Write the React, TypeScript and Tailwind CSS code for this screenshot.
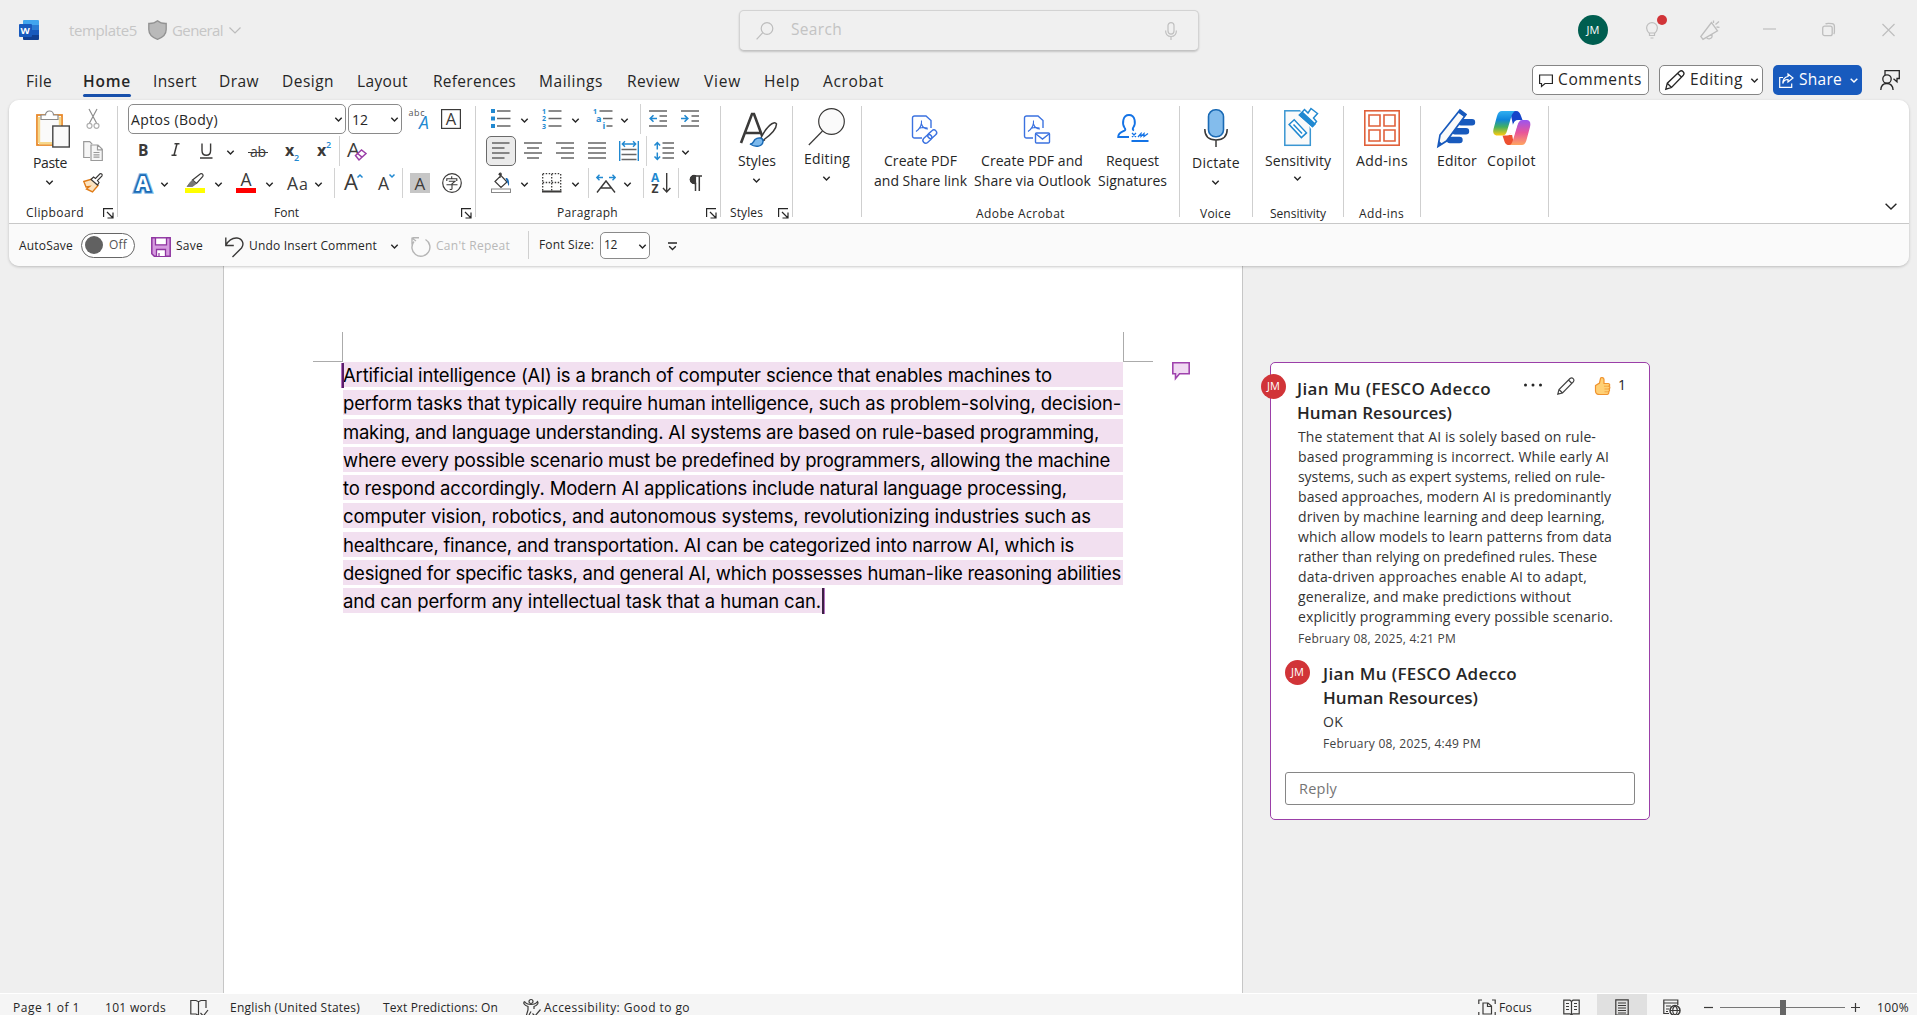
import React, { useLayoutEffect, useRef, useState } from "react";

type FitProps = { w: number; className?: string; children: string };

/** Single line of text whose letter spacing is adjusted to fill a given width. */
function Fit({ w, className = "", children }: FitProps) {
  const ref = useRef<HTMLSpanElement>(null);
  const [spacing, setSpacing] = useState(0);
  useLayoutEffect(() => {
    const el = ref.current;
    if (!el) return;
    el.style.letterSpacing = "0px";
    const natural = el.getBoundingClientRect().width;
    const next = (w - natural) / Math.max(1, children.length);
    el.style.letterSpacing = `${next}px`;
    setSpacing(next);
  }, [w, children, className]);
  return (
    <span className="flex shrink-0">
      <span ref={ref} className={`inline-block shrink-0 whitespace-nowrap ${className}`} style={{ letterSpacing: `${spacing}px` }}>
        {children}
      </span>
    </span>
  );
}

type IconProps = { w?: number; h?: number; className?: string; children: React.ReactNode };

function Icon({ w = 20, h = 20, className = "", children }: IconProps) {
  return (
    <svg width={w} height={h} viewBox={`0 0 ${w} ${h}`} fill="none" stroke="#3b3a39" strokeWidth="1.2" className={`block shrink-0 overflow-visible ${className}`}>
      {children}
    </svg>
  );
}

function Chev({ className = "" }: { className?: string }) {
  return (
    <Icon w={7} h={5} className={className}>
      <path d="M.3.8 3.500 4 6.700.8" stroke="#262626" strokeWidth="1.4" />
    </Icon>
  );
}

function Divider({ className = "" }: { className?: string }) {
  return <div className={`h-[30px] w-px shrink-0 bg-[#d2d2d2] ${className}`} />;
}

function Launcher({ className = "" }: { className?: string }) {
  return (
    <Icon w={11} h={11} className={className}>
      <path d="M.6 9V.6H10M4 4l5.5 5.5M10 4.5V10H4.5" stroke="#262626" />
    </Icon>
  );
}

function Group({ className, children }: { className: string; children: React.ReactNode }) {
  return (
    <section className={`relative flex h-[123px] shrink-0 flex-col after:absolute after:right-0 after:top-[6px] after:h-[111px] after:w-px after:bg-[#cfcfcf] ${className}`}>
      {children}
    </section>
  );
}

const row = "flex h-8 shrink-0 items-center";
const content = "flex h-[101px] shrink-0";
const footer = "flex h-[22px] shrink-0 items-center";
const label = "mt-[2px] text-[12px] text-[#262626]";
const lowLabel = "mt-[4px] text-[12px] text-[#262626]";
const big = "text-[14px] leading-[20px] text-[#262626]";

function G({ x, y, s, f = "#3b3a39", wt = 400, children, ...rest }: { x: number; y: number; s: number; f?: string; wt?: number; children: string } & React.SVGProps<SVGTextElement>) {
  return (
    <text x={x} y={y} fontSize={s} fill={f} stroke="none" fontWeight={wt} {...rest}>
      {children}
    </text>
  );
}

function TitleBar() {
  return (
    <header className="flex h-[60px] items-center">
      <Icon className="ml-[19px]">
        <g stroke="none">
          <path d="M5 0h14a1 1 0 0 1 1 1v4.5H4V1a1 1 0 0 1 1-1Z" fill="#41a5ee" />
          <path d="M4 5h16v5H4z" fill="#2b7cd3" />
          <path d="M4 10h16v5H4z" fill="#185abd" />
          <path d="M4 15h16v4a1 1 0 0 1-1 1H5a1 1 0 0 1-1-1Z" fill="#103f91" />
          <rect y="4" width="13" height="13" rx="1" fill="#185abd" />
          <G x={1.5} y={14.2} s={9.6} f="#fff" wt={700}>W</G>
        </g>
      </Icon>
      <Fit w={68} className="ml-[30px] text-[15px] text-[#c6c6c6]">template5</Fit>
      <Icon w={19} className="ml-[11px]">
        <path d="M9.5.8C7 3 4 3.6.8 3.5v6c0 5 3.5 8 8.7 9.8 5.2-1.8 8.7-4.8 8.7-9.8v-6C15 3.6 12 3 9.5.8Z" fill="#b9b9b9" stroke="#929292" strokeWidth="1.3" />
      </Icon>
      <Fit w={51} className="ml-[5px] text-[15px] text-[#c6c6c6]">General</Fit>
      <Icon w={12} h={7} className="ml-[6px]"><path d="m.5.5 5.500 5.500 5.500-5.500" stroke="#bcbcbc" /></Icon>
      <div className="ml-[498px] mt-[10px] flex h-[41px] w-[460px] items-center self-start rounded-[5px] border border-[#d3d3d3] border-b-[#c3c3c3] bg-[#f0f0f0] shadow-[0_1px_2px_rgba(0,0,0,0.18)]">
        <Icon w={18} h={18} className="ml-[16px]"><g stroke="#bdbdbd"><circle cx="11" cy="6.5" r="5.8" /><path d="M6.800 10.700.6 17.300" /></g></Icon>
        <Fit w={51} className="mb-[2px] ml-[17px] text-[15.5px] text-[#c3c3c3]">Search</Fit>
        <Icon w={12} h={18} className="ml-[323px]"><g stroke="#c0c0c0"><rect x="3" y=".6" width="6" height="11.5" rx="3" /><path d="M.6 8.500c0 4 2.400 6 5.400 6s5.400-2 5.400-6M6 14.500V18" /></g></Icon>
      </div>
      <div className="ml-[379px] flex size-[30px] items-center justify-center rounded-full bg-[#005e50] text-[11px] text-white">JM</div>
      <div className="relative ml-[38px]">
        <Icon w={12} h={17}><g stroke="#bebebe"><path d="M3.500 11.500C1.500 9.600.6 8 .6 6a5.400 5.400 0 0 1 10.800 0c0 2-.9 3.600-2.900 5.500v2h-5ZM3.500 11h5M4.500 16h3" /></g></Icon>
        <span className="absolute -top-[7px] left-[11px] size-[10px] rounded-full bg-[#d13438]" />
      </div>
      <Icon className="ml-[42px]"><g stroke="#bebebe" strokeWidth="1.3"><path d="M11.500 2.500.8 16.500 3 19.300l14.500-8.500ZM6.500 17.500c1 2 4.500 1.800 5.500-.5V14M13.500 3V.5M15.500 4.500l3.500-3M16.500 7l3 .3" /></g></Icon>
      <Icon w={13} h={2} className="mb-[2px] ml-[43px]"><path d="M0 1h13" stroke="#bebebe" /></Icon>
      <Icon w={13} h={14} className="ml-[46px]"><g stroke="#bebebe" strokeWidth="1.3"><rect x=".7" y="3.2" width="9.5" height="9.5" rx="2" /><path d="M3.500 1c.5-.4 5.500-.4 6.500-.3 1.600.2 2.400 1.200 2.400 2.500V9c0 .7-.2 1.500-.7 2" /></g></Icon>
      <Icon w={13} h={12} className="ml-[47px]"><path d="m.5 0 12 12m0-12-12 12" stroke="#bebebe" /></Icon>
    </header>
  );
}

function Tabs() {
  const t = "text-[15.5px] text-[#262626]";
  return (
    <nav className="flex h-10 items-center">
      <div className="flex h-10 items-center">
        <Fit w={26} className={`ml-[26px] mt-[3px] ${t}`}>File</Fit>
        <div className="relative ml-[31px] flex h-full items-center">
          <Fit w={48} className="mt-[3px] text-[15.5px] font-semibold text-[#262626]">Home</Fit>
          <span className="absolute bottom-[3px] left-0 h-[3px] w-[48px] rounded-full bg-[#1850ab]" />
        </div>
        <Fit w={44} className={`ml-[22px] mt-[3px] ${t}`}>Insert</Fit>
        <Fit w={40} className={`ml-[22px] mt-[3px] ${t}`}>Draw</Fit>
        <Fit w={52} className={`ml-[23px] mt-[3px] ${t}`}>Design</Fit>
        <Fit w={51} className={`ml-[23px] mt-[3px] ${t}`}>Layout</Fit>
        <Fit w={83} className={`ml-[25px] mt-[3px] ${t}`}>References</Fit>
        <Fit w={64} className={`ml-[23px] mt-[3px] ${t}`}>Mailings</Fit>
        <Fit w={53} className={`ml-[24px] mt-[3px] ${t}`}>Review</Fit>
        <Fit w={37} className={`ml-[24px] mt-[3px] ${t}`}>View</Fit>
        <Fit w={36} className={`ml-[23px] mt-[3px] ${t}`}>Help</Fit>
        <Fit w={61} className={`ml-[23px] mt-[3px] ${t}`}>Acrobat</Fit>
      </div>
      <div className="ml-auto flex items-center pr-[17px]">
        <button className="flex h-[30px] w-[117px] items-center rounded-[5px] border border-[#858585] bg-white">
          <Icon w={14} h={13} className="ml-[6px]"><path d="M.6 1h12.800v8.500H6L2.500 12.500v-3H.6Z" stroke="#262626" /></Icon>
          <Fit w={84} className={`ml-[5px] ${t}`}>Comments</Fit>
        </button>
        <button className="ml-[10px] flex h-[30px] w-[104px] items-center rounded-[5px] border border-[#858585] bg-white">
          <Icon w={20} h={20} className="ml-[5px]"><path d="M.8 19.200 2.300 13.200 14.500 1.600c2.600-2.200 5.800 1.200 3.800 3.600L6.500 17.500ZM12.800 3.500l3.800 3.800M2.300 13.200l4.200 4.300" stroke="#262626" strokeWidth="1.3" /></Icon>
          <Fit w={53} className={`ml-[5px] ${t}`}>Editing</Fit>
          <Chev className="ml-[8px]" />
        </button>
        <button className="ml-[10px] flex h-[30px] w-[89px] items-center rounded-[5px] bg-[#185abd]">
          <Icon w={15} h={15} className="ml-[6px]"><path d="M4 4.500H.7v9.800h12V10.500M9 1l5 4-5 4V6.500C6 6.400 4.500 8 3.800 10.500 3.900 6.800 6 4 9 3.500Z" stroke="#fff" /></Icon>
          <Fit w={43} className="ml-[5px] text-[15.5px] text-white">Share</Fit>
          <Icon w={8} h={5} className="ml-[8px]"><path d="M.7.8 4 4 7.300.8" stroke="#fff" strokeWidth="1.5" /></Icon>
        </button>
        <Icon w={20} h={20} className="ml-[18px]"><path d="M5 5V.7h14.300v7.800H17v3.300l-3.500-3M.8 20c.2-4 2.500-6.500 6-6.500s6 2.500 6.300 6.500" stroke="#262626" strokeWidth="1.3" /><circle cx="7" cy="9" r="4.2" stroke="#262626" strokeWidth="1.3" /></Icon>
      </div>
    </nav>
  );
}

function Clipboard() {
  return (
    <Group className="w-[109px]">
      <div className={content}>
        <div className="flex w-[74px] flex-col pt-[10px]">
          <Icon w={34} h={38} className="ml-[27px]">
            <rect x="1" y="5" width="25" height="30" fill="#fafafa" stroke="#e8892b" strokeWidth="1.8" />
            <path d="M3 33.200h13M3 7v26M24 7v8" stroke="#f6d78b" strokeWidth="2.4" />
            <path d="M5 9.500V5h4.500a4 4 0 0 1 8 0H22v4.500Z" fill="#fff" stroke="#8a8a8a" />
            <rect x="16.8" y="16" width="16.5" height="21" fill="#fafafa" stroke="#444" strokeWidth="1.4" />
          </Icon>
          <Fit w={34} className={`${big} ml-[24px] mt-[5px]`}>Paste</Fit>
          <Chev className="ml-[37px] mt-[7px]" />
        </div>
        <div className="flex flex-col gap-3 pt-[9px]">
          <Icon><path d="M6 0l7.500 14M14 0 6.500 14" stroke="#8e8e8e" /><circle cx="6.5" cy="16.8" r="2.5" stroke="#b0b0b0" /><circle cx="13.5" cy="16.8" r="2.5" stroke="#b0b0b0" /></Icon>
          <Icon><path d="M7 16.500H.7V.7h6l2.500 2.500" stroke="#9a9a9a" fill="#f6f6f6" /><path d="M8 4h7l4.300 4.300v11.200H8ZM14.500 4v4.800h4.800M10.500 11.500h6M10.500 13.800h6M10.500 16.200h6" stroke="#9a9a9a" fill="#f6f6f6" /></Icon>
          <Icon><path d="M.8 8.500 9 6l6 6.500-5.500 6.500L3.500 16l3-2.500-3.500.5Z" fill="#fbe3c0" stroke="#e07b16" strokeWidth="1.4" /><path d="M8 6.500 10.500 4l2 1.500L17 .8c1.500-.5 2.700.8 2 2L14.500 7.500 16 9.500l-1.500 2.500Z" fill="#fff" stroke="#3b3a39" /></Icon>
        </div>
      </div>
      <div className={footer}>
        <Fit w={58} className={`${label} ml-[17px]`}>Clipboard</Fit>
        <Launcher className="ml-[19px] mt-[2px]" />
      </div>
    </Group>
  );
}

function FontGroup() {
  return (
    <Group className="w-[358px] pt-[3px]">
      <div className={`${row} pl-[10px]`}>
        <div className="flex h-[30px] w-[218px] items-center rounded-[5px] border border-[#8a8a8a]">
          <Fit w={87} className="ml-[2px] text-[14px] text-[#262626]">Aptos (Body)</Fit>
          <Chev className="ml-auto mr-[3px]" />
        </div>
        <div className="ml-[2px] flex h-[30px] w-[54px] items-center rounded-[5px] border border-[#8a8a8a]">
          <Fit w={16} className="ml-[3px] text-[14px] text-[#262626]">12</Fit>
          <Chev className="ml-auto mr-[3px]" />
        </div>
        <Icon className="ml-[7px]"><G x={-0.5} y={7} s={9} f="#555" textLength={16}>abc</G><G x={10} y={20} s={17.5} f="#2189d1" fontStyle="italic">A</G></Icon>
        <Icon className="ml-[12px]"><rect x=".6" y=".6" width="18.8" height="18.8" /><G x={4.8} y={16} s={16.5}>A</G></Icon>
      </div>
      <div className={`${row} pl-[20px]`}>
        <Icon w={11}><G x={0} y={14.5} s={15.5} wt={700}>B</G></Icon>
        <Icon w={10} className="ml-[22px]"><path d="M3.500 2.700H8.500M.5 14.300H5.500M6 2.700 3 14.300" strokeWidth="1.5" /></Icon>
        <Icon w={13} className="ml-[19px]"><path d="M2 2.500v7c0 3 1.800 4.800 4.300 4.800s4.300-1.800 4.300-4.800v-7M0 17h12.500" strokeWidth="1.4" /></Icon>
        <Chev className="ml-[14px] mt-[2px]" />
        <Icon className="ml-[14px]"><G x={2} y={16} s={14} textLength={16}>ab</G><path d="M0 11.500h20" /></Icon>
        <Icon w={15} className="ml-[17px]"><G x={0} y={14.5} s={16} wt={700}>x</G><G x={9} y={20} s={9} f="#2189d1" wt={600}>2</G></Icon>
        <Icon w={15} className="ml-[17px]"><G x={0} y={14.5} s={16} wt={700}>x</G><G x={9} y={6.5} s={9} f="#2189d1" wt={600}>2</G></Icon>
        <Divider className="ml-[7px]" />
        <Icon className="ml-[7px]"><G x={0} y={16} s={20.5}>A</G><path d="M8.500 14.500 14.500 9l4.500 3.500-7 6.500ZM10.500 12.500l4.500 3.700" fill="#fff" stroke="#9b3fa8" strokeWidth="1.5" /></Icon>
      </div>
      <div className={`${row} pl-[15px]`}>
        <Icon><G x={2.8} y={17.5} s={20.5} f="#fff" wt={700} style={{ stroke: "#84bdea", strokeWidth: 5.5 }}>A</G><G x={2.8} y={17.5} s={20.5} f="#fff" wt={700} style={{ stroke: "#1a6ab5", strokeWidth: 3.4 }}>A</G><G x={2.8} y={17.5} s={20.5} f="#fff" wt={700}>A</G></Icon>
        <Chev className="ml-[8px] mt-[2px]" />
        <Icon className="ml-[17px]"><path d="M0 17.500h20" stroke="#ff0" strokeWidth="5" /><path d="m7.500 7 8-6.300c1.500-.7 3.300 1.100 2.300 2.700L11.500 10.500Z" /><path d="M7.500 7 5 9.500 2 13.500h5.500l4-3Z" fill="#777" stroke="#555" strokeWidth=".6" /></Icon>
        <Chev className="ml-[10px] mt-[2px]" />
        <Icon className="ml-[14px]"><G x={4.5} y={13} s={17.5}>A</G><path d="M0 17.500h20" stroke="#f00" strokeWidth="5" /></Icon>
        <Chev className="ml-[10px] mt-[2px]" />
        <Icon className="ml-[14px]"><G x={0} y={17} s={17.5}>A</G><G x={12} y={17} s={16}>a</G></Icon>
        <Chev className="ml-[8px] mt-[2px]" />
        <Divider className="ml-[12px]" />
        <Icon className="ml-[9px]"><G x={0} y={17} s={22}>A</G><path d="m13.500 4.500 2.500-2.500 2.500 2.500" stroke="#2189d1" strokeWidth="1.5" /></Icon>
        <Icon className="ml-[14px]"><G x={0} y={17} s={17.5}>A</G><path d="m11.500 1.500 2.500 2.500 2.500-2.500" stroke="#2189d1" strokeWidth="1.5" /></Icon>
        <Divider className="ml-[4px]" />
        <Icon className="ml-[7px]"><rect width="20" height="20" fill="#c6c6c6" stroke="none" /><G x={4.5} y={16.5} s={17}>A</G></Icon>
        <Icon className="ml-[12px]"><circle cx="10" cy="10" r="9.3" /><path d="M9.700 3.300v2M4.800 8V5.800h10V8M6.800 8.300H13L10 10.800v5c0 .8-1 .8-2.300.6M4.500 11.800h11" strokeWidth="1.1" /></Icon>
      </div>
      <div className={`mt-[2px] ${footer}`}>
        <Fit w={25} className={`${label} ml-[156px]`}>Font</Fit>
        <Launcher className="ml-[162px] mt-[2px]" />
      </div>
    </Group>
  );
}

const g = "#666";
const b = "#2189d1";

function ParagraphGroup() {
  return (
    <Group className="w-[245px] pt-[3px]">
      <div className={`${row} pl-[15px]`}>
        <Icon><path d="M6 2h13.500M6 9.500h13.500M6 17h13.500" stroke={g} strokeWidth="1.4" /><path d="M0 0h4v4H0zM0 7.500h4v4H0zM0 15h4v4H0z" fill={b} stroke="none" /></Icon>
        <Chev className="ml-[10px] mt-[2px]" />
        <Icon className="ml-[14px]"><path d="M6.500 2H19.500M6.500 9.500H19.500M6.500 17H19.500" stroke={g} strokeWidth="1.4" /><G x={0} y={4.5} s={7} f={b} wt={700}>1</G><G x={0} y={12} s={7} f={b} wt={700}>2</G><G x={0} y={19.5} s={7} f={b} wt={700}>3</G></Icon>
        <Chev className="ml-[10px] mt-[2px]" />
        <Icon className="ml-[14px]"><path d="M6.500 2H19.500M10 9.500H19.500M13.500 17H19.500" stroke={g} strokeWidth="1.4" /><G x={0} y={4.5} s={7} f={b} wt={700}>1</G><G x={3} y={12.5} s={9} f={b} wt={700}>a</G><G x={9.5} y={20} s={9} f={b} wt={700}>i</G></Icon>
        <Chev className="ml-[8px] mt-[2px]" />
        <Divider className="ml-[12px]" />
        <Icon className="ml-[8px]"><path d="M0 2h18M10.500 7H18M10.500 12H18M0 17h18" stroke={g} strokeWidth="1.4" /><path d="M8 9.500H1.500M4.500 6.300 1.200 9.500l3.300 3.200" stroke={b} strokeWidth="1.6" /></Icon>
        <Icon className="ml-[12px]"><path d="M0 2h18M10.500 7H18M10.500 12H18M0 17h18" stroke={g} strokeWidth="1.4" /><path d="M0 9.500h6.500M3.500 6.300l3.300 3.200-3.300 3.200" stroke={b} strokeWidth="1.6" /></Icon>
      </div>
      <div className={`${row} pl-[10px]`}>
        <div className="flex size-[30px] items-center justify-center rounded-[5px] border border-[#6a6a6a] bg-[#ebebeb]">
          <Icon w={18}><path d="M0 2h17.500M0 7h12.500M0 12h17.500M0 17h12.500" stroke={g} strokeWidth="1.4" /></Icon>
        </div>
        <Icon w={18} className="ml-[8px]"><path d="M0 2h18M3 7h12M0 12h18M3 17h12" stroke={g} strokeWidth="1.4" /></Icon>
        <Icon w={18} className="ml-[14px]"><path d="M0 2h18M5 7h13M0 12h18M5 17h13" stroke={g} strokeWidth="1.4" /></Icon>
        <Icon w={18} className="ml-[14px]"><path d="M0 2h18M0 7h18M0 12h18M0 17h18" stroke={g} strokeWidth="1.4" /></Icon>
        <Icon className="ml-[13px]"><path d="M2.500 8.500h15M2.500 13.500h15M2.500 18.500h15" stroke={g} strokeWidth="1.4" /><path d="M.7 0v20M19.300 0v20M3.500 3h13M6 .3 3.300 3 6 5.700M14 .3 16.700 3 14 5.700" stroke={b} strokeWidth="1.4" /></Icon>
        <Divider className="ml-[7px]" />
        <Icon className="ml-[7px]"><path d="M8.500 2h11.500M8.500 7h11.500M8.500 12h11.500M8.500 17h11.500" stroke={g} strokeWidth="1.4" /><path d="M3.300 1.500v7M3.300 11.500v7M.5 4.500 3.300 1.500l2.800 3M.5 15.500l2.800 3 2.800-3" stroke={b} strokeWidth="1.5" /></Icon>
        <Chev className="ml-[8px] mt-[2px]" />
      </div>
      <div className={`${row} pl-[15px]`}>
        <Icon><path d="M9 1v4M4 8.500 10 2.500l6 6.500-6 5.500ZM10 2.500C11-.5 8-.5 8 2" /><path d="M14.500 5c2.500-.5 4 2 3.500 8-1.500-1-1-3.500-2-4Z" fill="#1a6ab5" stroke="none" /><rect x=".5" y="16" width="19" height="3.5" fill="#fff" stroke="#888" strokeWidth="1" /></Icon>
        <Chev className="ml-[10px] mt-[2px]" />
        <Icon className="ml-[14px]"><path d="M.7.700h18M.7 9.500h18M.7 1v17M9.700 1v17M18.700 1v17" strokeDasharray="1.5 1.5" strokeWidth="1.3" /><path d="M0 18.500h19.500" strokeWidth="2" /></Icon>
        <Chev className="ml-[10px] mt-[2px]" />
        <Divider className="ml-[9px]" />
        <Icon className="ml-[7px]"><path d="M1 19.500 10 8l9 11.500M4.500 15h11" strokeWidth="1.4" /><path d="M7 4.500H1M3.500 1.800.8 4.500 3.500 7.200M13 4.500h6M16.500 1.800 19.200 4.500 16.500 7.200" stroke={b} strokeWidth="1.4" /></Icon>
        <Chev className="ml-[8px] mt-[2px]" />
        <Divider className="ml-[12px]" />
        <Icon className="ml-[7px]"><G x={0} y={8.5} s={12} f={b} wt={700}>A</G><G x={0.5} y={19.8} s={12} wt={700}>Z</G><path d="M15.700 0v19M12 15l3.700 4 3.700-4" strokeWidth="1.4" /></Icon>
        <Divider className="ml-[7px]" />
        <Icon w={14} className="ml-[10px]"><path d="M5.500 2.500a4 4 0 0 0 0 8h1V18M10.300 18V3M5 2.900h8" strokeWidth="1.5" /><path d="M6.500 2.500v8H5.300a4 4 0 0 1 0-8Z" fill="#3b3a39" /></Icon>
      </div>
      <div className={`mt-[2px] ${footer}`}>
        <Fit w={61} className={`${label} ml-[81px]`}>Paragraph</Fit>
        <Launcher className="ml-[88px] mt-[2px]" />
      </div>
    </Group>
  );
}

function Ribbon() {
  return (
    <div className="flex h-[124px] border-b border-[#c8c8c8] bg-white">
      <Clipboard />
      <FontGroup />
      <ParagraphGroup />
      <Group className="w-[72px]">
        <div className={`${content} flex-col pt-[12px]`}>
          <Icon w={37} h={36} className="ml-[19px]">
            <path d="M1 31 12 2h2l10 27M5 21h15" strokeWidth="2.6" />
            <path d="M21 26C26 15 34 8 36.500 12c0 5-6 11-13 16" fill="#fff" strokeWidth="1.5" />
            <path d="M10 32c3 .5 3-2 5-4.500 3-2.500 8.500-2 8 2-.5 5-7 6.500-13 2.500Z" fill="#7cb9ec" stroke="#1a6ab5" strokeWidth="1.5" />
          </Icon>
          <Fit w={38} className={`${big} ml-[17px] mt-[3px]`}>Styles</Fit>
          <Chev className="ml-[32px] mt-[7px]" />
        </div>
        <div className={footer}>
          <Fit w={33} className={`${label} ml-[9px]`}>Styles</Fit>
          <Launcher className="ml-[15px] mt-[2px]" />
        </div>
      </Group>
      <Group className="w-[69px]">
        <div className={`${content} flex-col pt-[8px]`}>
          <Icon w={38} h={38} className="ml-[15px]"><circle cx="23.5" cy="13.5" r="12.8" fill="#fafafa" /><path d="M14.500 23 .8 37" /></Icon>
          <Fit w={46} className={`${big} ml-[11px] mt-[3px]`}>Editing</Fit>
          <Chev className="ml-[30px] mt-[7px]" />
        </div>
      </Group>
      <Group className="w-[318px]">
        <div className={`${content} pt-[14px]`}>
          <div className="ml-[12px] flex w-[93px] flex-col">
            <Icon w={26} h={29} className="ml-[38px] mt-[1px]">
              <g stroke="#3b72e0" strokeWidth="1.4"><path d="M10 23H2.500a2 2 0 0 1-2-2V3a2 2 0 0 1 2-2H14l5 4.500V13" /><path d="M4 16.500c3.500-2.500 6-7 5.500-11M9.500 9c1 3 3.500 5 6.500 5M6.500 13.500c3-1 6-1.500 9-.5" strokeWidth="1.1" /><rect x="15" y="16.5" width="10" height="5.6" rx="2.8" transform="rotate(-42 20 19)" /><rect x="10.5" y="21" width="10" height="5.6" rx="2.8" transform="rotate(-42 15.5 24)" /></g>
            </Icon>
            <Fit w={73} className={`${big} ml-[10px] mt-[7px]`}>Create PDF</Fit>
            <Fit w={93} className={big}>and Share link</Fit>
          </div>
          <div className="ml-[7px] flex w-[117px] flex-col">
            <Icon w={26} h={29} className="ml-[50px] mt-[1px]">
              <g stroke="#3b72e0" strokeWidth="1.4"><path d="M9 23H2.500a2 2 0 0 1-2-2V3a2 2 0 0 1 2-2H14l5 4.500V13" /><path d="M4 16.500c3.500-2.500 6-7 5.500-11M9.500 9c1 3 3.500 5 6.500 5M6.500 13.500c3-1 6-1.500 9-.5" strokeWidth="1.1" /><rect x="11.5" y="18" width="14" height="10" rx="1" /><path d="m12 19 6.500 5 6.500-5" /></g>
            </Icon>
            <Fit w={102} className={`${big} ml-[7px] mt-[7px]`}>Create PDF and</Fit>
            <Fit w={117} className={big}>Share via Outlook</Fit>
          </div>
          <div className="ml-[7px] flex w-[69px] flex-col">
            <Icon w={32} h={29} className="ml-[19px]">
              <g stroke="#1473e6" strokeWidth="1.9"><path d="M12 23H1.200c0-4.500 4-5 6.500-6.500 1-.8.5-2-.3-3C5 10 5.500 1 12 1s7 9 4.300 12.500c-.8 1.500-.8 2.300.7 3" /><path d="M14.500 27h17" /><path d="m15 19 4 4m0-4-4 4M21 23l3-3.500v3l3-3v3l4-3" strokeWidth="1.3" /></g>
            </Icon>
            <Fit w={53} className={`${big} ml-[8px] mt-[8px]`}>Request</Fit>
            <Fit w={69} className={big}>Signatures</Fit>
          </div>
        </div>
        <div className={footer}><Fit w={89} className={`${lowLabel} ml-[114px]`}>Adobe Acrobat</Fit></div>
      </Group>
      <Group className="w-[73px]">
        <div className={`${content} flex-col pt-[9px]`}>
          <Icon w={24} h={38} className="ml-[24px]"><rect x="4.5" y=".8" width="15" height="27" rx="7" fill="#83bcec" stroke="#1a6ab5" strokeWidth="1.6" /><path d="M.8 20c0 7.500 4.200 11 11.200 11s11.200-3.500 11.200-11M12 31v7" strokeWidth="1.5" /></Icon>
          <Fit w={48} className={`${big} ml-[12px] mt-[6px]`}>Dictate</Fit>
          <Chev className="ml-[32px] mt-[7px]" />
        </div>
        <div className={footer}><Fit w={31} className={`${lowLabel} ml-[20px]`}>Voice</Fit></div>
      </Group>
      <Group className="w-[91px]">
        <div className={`${content} flex-col pt-[8px]`}>
          <Icon w={34} h={38} className="ml-[31px]">
            <rect x=".8" y="2.8" width="25.5" height="34.5" fill="#fafafa" stroke="#3a96d2" strokeWidth="1.5" />
            <path d="M15 0h19v21H27Z" fill="#fff" stroke="none" />
            <g stroke="#2189d1" strokeWidth="1.5"><rect x="4.8" y="17.2" width="18" height="7" transform="rotate(47 13.8 20.7)" fill="#fff" /><path d="m9.500 16.500 8.500 9" /><path d="m15.500 7 5-5.500L24 5l3-4.500 6.500 5-4 4.500 3 3.500-4 5Z" fill="#fff" /><path d="m15.500 7 3-2.500L31 16l-2.500 2.500Z" fill="#2189d1" /></g>
          </Icon>
          <Fit w={66} className={`${big} ml-[12px] mt-[5px]`}>Sensitivity</Fit>
          <Chev className="ml-[41px] mt-[5px]" />
        </div>
        <div className={footer}><Fit w={56} className={`${lowLabel} ml-[17px]`}>Sensitivity</Fit></div>
      </Group>
      <Group className="w-[77px]">
        <div className={`${content} flex-col pt-[10px]`}>
          <Icon w={36} h={36} className="ml-[20px]"><g stroke="#e0603a" strokeWidth="1.6"><rect x=".8" y=".8" width="34.4" height="34.4" /><path d="M5 5h11v11H5zM20 5h11v11H20zM5 20h11v11H5zM20 20h11v11H20z" /></g></Icon>
          <Fit w={52} className={`${big} ml-[12px] mt-[5px]`}>Add-ins</Fit>
        </div>
        <div className={footer}><Fit w={45} className={`${lowLabel} ml-[15px]`}>Add-ins</Fit></div>
      </Group>
      <Group className="w-[128px]">
        <div className={`${content} pt-[9px]`}>
          <div className="ml-[16px] flex w-[41px] flex-col">
            <Icon w={39} h={38}>
              <g stroke="#185abd" strokeWidth="6.4" strokeLinecap="round"><path d="M24 13.300h11M18 22.300h11M13 31h9.500" /></g>
              <path d="M3 26 23 1l6 4.500L9.500 32 1 37.500Z" fill="#fafafa" stroke="#185abd" strokeWidth="1.7" />
              <path d="m21 3.500 2-2.500 6 4.500-2 2.500ZM2 32l3.500 3L.8 37.800Z" fill="#185abd" stroke="none" />
            </Icon>
            <Fit w={40} className={`${big} mt-[4px]`}>Editor</Fit>
          </div>
          <div className="ml-[9px] flex w-[50px] flex-col">
            <Icon w={38} h={34} className="ml-[6px] mt-[2px]">
              <defs>
                <linearGradient id="cpl" x1="0" y1="0" x2="0" y2="1"><stop offset="0" stopColor="#31b0f0" /><stop offset=".35" stopColor="#0f86dc" /><stop offset=".65" stopColor="#44b060" /><stop offset="1" stopColor="#ffcb0c" /></linearGradient>
                <linearGradient id="cpr" x1="0" y1="0" x2="0" y2="1"><stop offset="0" stopColor="#9a55f0" /><stop offset=".5" stopColor="#e8559a" /><stop offset="1" stopColor="#ffa560" /></linearGradient>
              </defs>
              <g stroke="none">
                <path d="M17 0h6c3 0 4 2 5 5l1.500 4H25c-3 0-4 2-5 5Z" fill="#1544c9" />
                <path d="M21 34h-5c-3 0-4-1.500-5-5l-1.500-4.500H14c2.500 0 3.500-1 4.500-4Z" fill="#ed5030" />
                <path d="M9 0h14c-2 0-3.500 2-4.500 5L14 20c-1 3-2 4.500-5 4.500H4.500C1 24.500-.5 22 .5 18L4 5C5 1.500 6.500 0 9 0Z" fill="url(#cpl)" />
                <path d="M29 34H16c2 0 3-2 4-5l4.500-15c1-3 2-5 5-5h4C37 9 38 12 37 16l-3.500 13c-1 3.500-2.500 5-4.500 5Z" fill="url(#cpr)" />
                <path d="M22.500 10h4c-1.500 1-2 2.500-2.500 4l-3 10h-5c1.500-1 2-3 2.500-4.500l2-6.500c.5-1.500 1-2.500 2-3Z" fill="#fff" />
              </g>
            </Icon>
            <Fit w={49} className={`${big} mt-[6px]`}>Copilot</Fit>
          </div>
        </div>
      </Group>
      <div className="flex flex-1 items-end justify-end pb-[13px] pr-[12px]">
        <Icon w={12} h={7}><path d="m.6.700 5.400 5.300 5.400-5.300" stroke="#262626" strokeWidth="1.4" /></Icon>
      </div>
    </div>
  );
}

function QuickAccess() {
  const q = "text-[12px] text-[#262626]";
  return (
    <div className="flex h-[42px] items-center bg-[#fafafa]">
      <Fit w={54} className={`${q} ml-[10px] mt-px`}>AutoSave</Fit>
      <div className="ml-[8px] flex h-[25px] w-[54px] items-center rounded-full border border-[#666] bg-white">
        <span className="ml-[3px] size-[18px] rounded-full bg-[#616161]" />
        <Fit w={18} className="ml-[6px] text-[12px] text-[#555]">Off</Fit>
      </div>
      <Icon className="ml-[16px] mt-[4px]"><path d="M.8.8h18.400v18.400H3.300L.8 16.700Z" fill="#d59adf" stroke="#8e35a0" strokeWidth="1.5" /><path d="M4.500.8h11v7h-11zM5.500 19v-6.500h9V19" fill="#fff" stroke="#8e35a0" strokeWidth="1.3" /><path d="M8 19v-3" stroke="#8e35a0" /></Icon>
      <Fit w={27} className={`${q} ml-[5px] mt-px`}>Save</Fit>
      <Icon className="ml-[22px] mt-[3px]"><path d="M.8.500v8h8M.8 8.300C4 2.500 8 .7 12 1c5.500.5 7.500 6 4.500 10L7.500 20" strokeWidth="1.4" /></Icon>
      <Fit w={128} className={`${q} ml-[4px] mt-px`}>Undo Insert Comment</Fit>
      <Chev className="ml-[14px] mt-[2px]" />
      <Icon className="ml-[13px] mt-[3px]"><path d="M1 .5v7M8 .8H1.500M1.500 1.500 5 4M14.500 2.500A9 9 0 1 1 3 4.500" stroke="#b5b5b5" strokeWidth="1.4" /></Icon>
      <Fit w={74} className="ml-[5px] mt-px text-[12px] text-[#b8b8b8]">Can't Repeat</Fit>
      <div className="ml-[18px] h-[28px] w-px bg-[#d0d0d0]" />
      <Fit w={55} className={`${q} ml-[10px]`}>Font Size:</Fit>
      <div className="ml-[6px] flex h-[27px] w-[50px] items-center rounded-[5px] border border-[#8a8a8a] bg-white">
        <Fit w={13} className="ml-[3px] text-[12px] text-[#262626]">12</Fit>
        <Chev className="ml-auto mr-[3px] mt-[2px]" />
      </div>
      <Icon w={9} h={9} className="ml-[18px] mt-[2px]"><path d="M0 1h9M1.200 4.200 4.500 7.500l3.300-3.300" stroke="#262626" strokeWidth="1.3" /></Icon>
    </div>
  );
}

const lines: { text: string; w: number; cls: string }[] = [
  { text: "Artificial intelligence (AI) is a branch of computer science that enables machines to", w: 709, cls: "mb-[3px]" },
  { text: "perform tasks that typically require human intelligence, such as problem-solving, decision-", w: 778, cls: "mb-[4px]" },
  { text: "making, and language understanding. AI systems are based on rule-based programming,", w: 756, cls: "mb-[3px]" },
  { text: "where every possible scenario must be predefined by programmers, allowing the machine", w: 767, cls: "mb-[3px]" },
  { text: "to respond accordingly. Modern AI applications include natural language processing,", w: 724, cls: "mb-[3px]" },
  { text: "computer vision, robotics, and autonomous systems, revolutionizing industries such as", w: 748, cls: "mb-[4px]" },
  { text: "healthcare, finance, and transportation. AI can be categorized into narrow AI, which is", w: 731, cls: "mb-[3px]" },
  { text: "designed for specific tasks, and general AI, which possesses human-like reasoning abilities", w: 778, cls: "mb-[3px]" },
  { text: "and can perform any intellectual task that a human can.", w: 478, cls: "w-[480px]" },
];

function Page() {
  return (
    <main className="ml-[223px] w-[1020px] shrink-0 border-x border-[#c6c6c6] bg-white pt-[66px]">
      <div className="ml-[89px] flex h-[30px] w-[840px] justify-between">
        <div className="w-[30px] border-b border-r border-[#ababab]" />
        <div className="w-[30px] border-b border-l border-[#ababab]" />
      </div>
      <div className="flex pl-[119px]">
        <div className="relative flex w-[780px] flex-col">
          {lines.map((l) => (
            <div key={l.text} className={`flex h-[25px] items-center bg-[#f2e0f0] ${l.cls}`}>
              <Fit w={l.w} className="mt-px font-[Inter] text-[18.5px] leading-[25px] text-black">{l.text}</Fit>
            </div>
          ))}
          <span className="absolute -left-[2px] top-[1px] h-[25px] w-[3px] border-l border-[#b06fbd] bg-[#5c1f6c]" />
          <span className="absolute left-[479px] top-[226px] h-[26px] w-[3px] border-r border-[#b06fbd] bg-[#3c2044]" />
        </div>
        <Icon w={18} h={18} className="ml-[49px]"><path d="M.8.8h16.400v11H7.500L3.500 16.500V11.800H.8Z" fill="#f0d9f2" stroke="#9f43ad" strokeWidth="1.6" /></Icon>
      </div>
    </main>
  );
}

const commentLines: [string, number][] = [
  ["The statement that AI is solely based on rule-", 298],
  ["based programming is incorrect. While early AI", 311],
  ["systems, such as expert systems, relied on rule-", 307],
  ["based approaches, modern AI is predominantly", 313],
  ["driven by machine learning and deep learning,", 307],
  ["which allow models to learn patterns from data", 314],
  ["rather than relying on predefined rules. These", 299],
  ["data-driven approaches enable AI to adapt,", 289],
  ["generalize, and make predictions without", 273],
  ["explicitly programming every possible scenario.", 315],
];

function Avatar({ className }: { className: string }) {
  return <div className={`flex size-[25px] shrink-0 items-center justify-center rounded-full bg-[#d13438] text-[11px] text-white ${className}`}>JM</div>;
}

function CommentCard() {
  const name = "text-[17px] font-semibold leading-6 text-[#262626]";
  return (
    <aside className="ml-[27px] mt-[96px] flex h-[458px] w-[380px] flex-col rounded-[5px] border border-[#9b3fa8] bg-white">
      <div className="flex items-start">
        <Avatar className="-ml-[10px] mt-[11px]" />
        <div className="ml-[11px] mt-[14px] flex w-[194px] flex-col">
          <Fit w={194} className={name}>Jian Mu (FESCO Adecco</Fit>
          <Fit w={155} className={name}>Human Resources)</Fit>
        </div>
        <Icon w={18} h={4} className="ml-[33px] mt-[20px]"><g fill="#262626" stroke="none"><circle cx="1.5" cy="2" r="1.5" /><circle cx="9" cy="2" r="1.5" /><circle cx="16.5" cy="2" r="1.5" /></g></Icon>
        <Icon w={18} h={18} className="ml-[15px] mt-[14px]"><path d="M.8 17.200 2 12.500 13 1.500c2.300-1.800 5 .9 3.500 3.200L5.500 16ZM11.500 3l3.500 3.500M2 12.500l3.500 3.500" stroke="#424242" /></Icon>
        <Icon w={15} h={18} className="ml-[20px] mt-[14px]"><path d="M.5 8.500 4.500 6 5.500 1.500C5.800 0 9 .2 9 2.500v4h4.300c1.700 0 1.700 2 .8 2.600 1 .5 1 2.200 0 2.800.7.7.5 2.300-.4 2.700.4 1.400-.2 2.900-1.700 2.900H5C2 17.500.5 16.500.5 14Z" fill="#ffd075" stroke="#f0932e" /><path d="M9 9.200h5M9.500 12h4.500M9.500 14.800h4" stroke="#f0a040" strokeWidth=".9" /></Icon>
        <span className="ml-[8px] mt-[12px] text-[14px] leading-[20px] text-[#262626]">1</span>
      </div>
      <div className="ml-[27px] mt-[2px] flex flex-col">
        {commentLines.map(([text, w]) => (
          <Fit key={text} w={w} className="text-[14px] leading-5 text-[#333]">{text}</Fit>
        ))}
        <Fit w={158} className="mt-[2px] text-[12px] leading-5 text-[#424242]">February 08, 2025, 4:21 PM</Fit>
      </div>
      <div className="mt-[11px] flex">
        <Avatar className="ml-[14px]" />
        <div className="ml-[13px] mt-[2px] flex flex-col">
          <Fit w={194} className={name}>Jian Mu (FESCO Adecco</Fit>
          <Fit w={155} className={name}>Human Resources)</Fit>
          <Fit w={20} className="mt-[2px] text-[14px] leading-5 text-[#333]">OK</Fit>
          <Fit w={158} className="mt-[2px] text-[12px] leading-5 text-[#424242]">February 08, 2025, 4:49 PM</Fit>
        </div>
      </div>
      <div className="ml-[14px] mt-[18px] flex h-[33px] w-[350px] items-center rounded-[3px] border border-[#868686] bg-white">
        <Fit w={38} className="ml-[13px] text-[14.5px] text-[#757575]">Reply</Fit>
      </div>
    </aside>
  );
}

function StatusBar() {
  const s = "text-[12px] text-[#262626]";
  return (
    <footer className="flex h-[22px] items-start border-t border-white bg-[#f5f5f5]">
      <div className="flex h-[27px] shrink-0 items-center">
        <Fit w={67} className={`${s} ml-[13px]`}>Page 1 of 1</Fit>
        <Fit w={61} className={`${s} ml-[25px]`}>101 words</Fit>
        <Icon w={18} h={18} className="ml-[24px]"><path d="M8.500 16.500 6 15H.8V1.500H6l2.500 1.200L11 1.500h5V9M8.500 3v14M10.500 14l2.800 3L18 11" /></Icon>
        <Fit w={130} className={`${s} ml-[22px]`}>English (United States)</Fit>
        <Fit w={115} className={`${s} ml-[23px]`}>Text Predictions: On</Fit>
        <Icon w={18} h={18} className="ml-[25px]"><circle cx="8" cy="2.5" r="2" /><path d="M1.500 2.500c2 3 4 3 6.500 3s4.500 0 6.500-3c1 1.500.5 3.500-3.500 5v2.500M1.500 2.500C0 4 1 6 5 7.500V11l-1.500 5c.5 1.500 1.800 1 2.500 0L8 12.500M9.500 14.500l2.500 2.500 5.500-6.500" /></Icon>
        <Fit w={146} className={`${s} ml-[3px]`}>Accessibility: Good to go</Fit>
      </div>
      <div className="ml-auto flex h-[27px] shrink-0 items-center">
        <Icon w={18} h={18}><path d="M4 1H.8v4M14 1h3.200v4M.8 13v4H4M17.200 13v4H14M5 4h5l3.500 3v8H5ZM9.500 4v3.500h4" /></Icon>
        <Fit w={33} className={`${s} ml-[3px]`}>Focus</Fit>
        <Icon w={17} h={17} className="ml-[31px]"><path d="M8.500 16 7 14.800H.8V1.200H7l1.500 1.200L10 1.200h6.200v13.600H10ZM8.500 2.500V16M3 4.500h3M3 7.500h3M3 10.500h3M11 4.500h3M11 7.500h3M11 10.500h3" /></Icon>
        <div className="ml-[17px] flex h-full w-[50px] items-center justify-center bg-[#e0e0e0]">
          <Icon w={14} h={17}><path d="M.8.8h12.400v15.400H.8ZM3 4h8M3 6.500h8M3 9h8M3 11.500h8M3 14h8" /></Icon>
        </div>
        <Icon w={18} h={17} className="ml-[16px]"><path d="M6 14.500H.8V1h14v5M.8 4h14M3 7h5M3 10h3M3 12.500h2" /><circle cx="12" cy="11.5" r="5" fill="#f5f5f5" strokeWidth="1.5" /><path d="M7 11.500h10M12 6.500c-3 3-3 7 0 10M12 6.500c3 3 3 7 0 10" /></Icon>
        <Icon w={9} h={9} className="ml-[23px]"><path d="M0 4.500h9" /></Icon>
        <div className="relative ml-[7px] h-[15px] w-[125px]">
          <div className="mt-[7px] h-px bg-[#777]" />
          <span className="absolute left-[60px] top-0 h-[15px] w-[6px] bg-[#666]" />
        </div>
        <Icon w={9} h={9} className="ml-[6px]"><path d="M0 4.500h9M4.500 0v9" /></Icon>
        <Fit w={32} className={`${s} ml-[17px] mr-[8px]`}>100%</Fit>
      </div>
    </footer>
  );
}

export default function App() {
  return (
    <div className="flex h-[1015px] w-[1917px] flex-col overflow-hidden bg-[#efefef] font-['Open_Sans','Noto_Sans',sans-serif]">
      <TitleBar />
      <Tabs />
      <div className="z-10 mx-[9px] h-[166px] w-[1900px] overflow-hidden rounded-[10px] shadow-[0_1px_3px_rgba(0,0,0,0.22)]">
        <Ribbon />
        <QuickAccess />
      </div>
      <div className="flex min-h-0 flex-1 overflow-hidden">
        <Page />
        <CommentCard />
      </div>
      <StatusBar />
    </div>
  );
}
